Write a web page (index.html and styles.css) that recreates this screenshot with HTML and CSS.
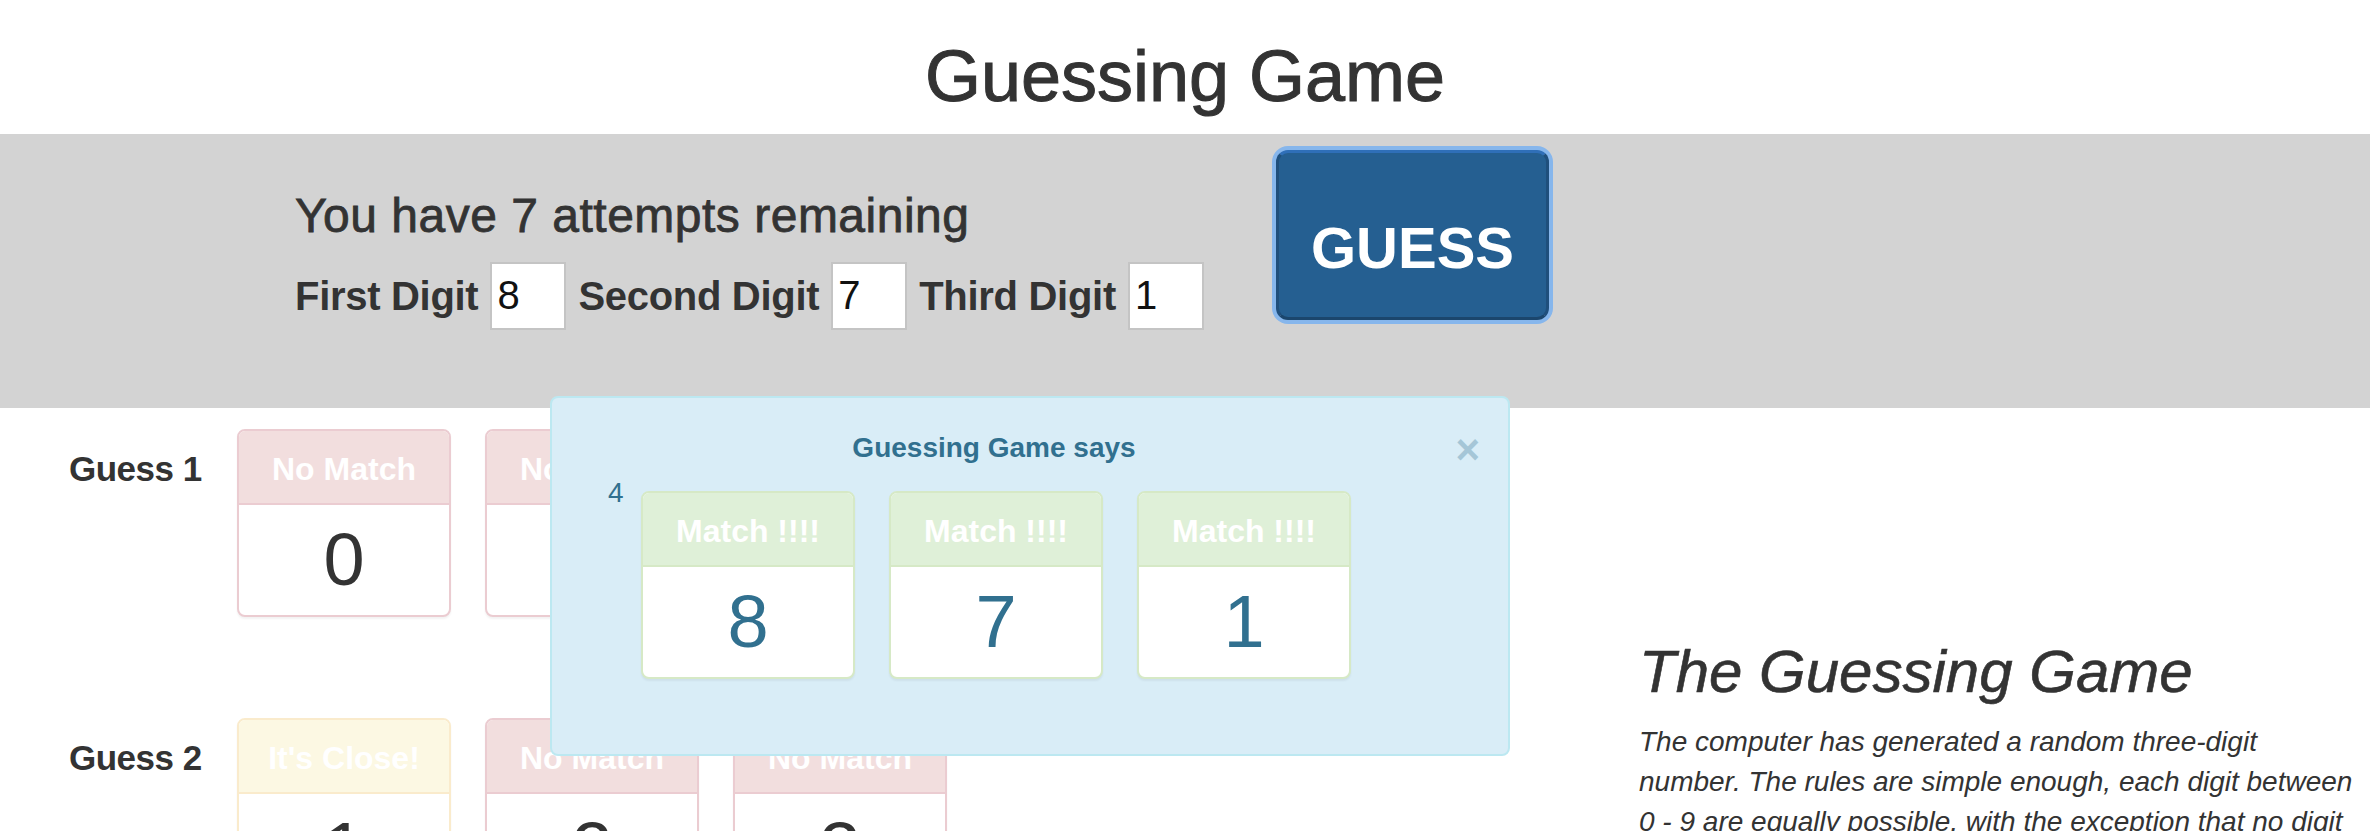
FILE: index.html
```html
<!DOCTYPE html>
<html lang="en">
<head>
<meta charset="utf-8">
<title>Guessing Game</title>
<link rel="stylesheet" href="styles.css">
</head>
<body>
<h1 class="page-title">Guessing Game</h1>

<section class="band">
  <div class="controls">
    <h3 class="attempts">You have 7 attempts remaining</h3>
    <div class="digits">
      <label class="digit-label" for="d1">First Digit</label>
      <input class="digit-input" id="d1" type="text" value="8">
      <label class="digit-label" for="d2">Second Digit</label>
      <input class="digit-input" id="d2" type="text" value="7">
      <label class="digit-label" for="d3">Third Digit</label>
      <input class="digit-input" id="d3" type="text" value="1">
    </div>
  </div>
  <button class="guess-btn" type="button">GUESS</button>
</section>

<main class="main">
  <div class="guesses">
    <div class="guess-row">
      <div class="guess-label">Guess 1</div>
      <div class="cards">
        <div class="card card-danger"><div class="card-head">No Match</div><div class="card-body">0</div></div>
        <div class="card card-danger"><div class="card-head">No Match</div><div class="card-body">5</div></div>
        <div class="card card-danger"><div class="card-head">No Match</div><div class="card-body">9</div></div>
      </div>
    </div>
    <div class="guess-row">
      <div class="guess-label">Guess 2</div>
      <div class="cards">
        <div class="card card-warning"><div class="card-head">It's Close!</div><div class="card-body">1</div></div>
        <div class="card card-danger"><div class="card-head">No Match</div><div class="card-body">2</div></div>
        <div class="card card-danger"><div class="card-head">No Match</div><div class="card-body">3</div></div>
      </div>
    </div>
  </div>

  <aside class="about">
    <h2 class="about-title">The Guessing Game</h2>
    <p class="about-text">The computer has generated a random three-digit number. The rules are simple enough, each digit between 0 - 9 are equally possible, with the exception that no digit is repeated. You have 10 attempts to find the number.</p>
  </aside>
</main>

<div class="alert" role="alert">
  <span class="alert-close">&times;</span>
  <div class="alert-title">Guessing Game says</div>
  <div class="alert-row">
    <span class="alert-count">4</span>
    <div class="cards">
      <div class="card card-success"><div class="card-head">Match !!!!</div><div class="card-body">8</div></div>
      <div class="card card-success"><div class="card-head">Match !!!!</div><div class="card-body">7</div></div>
      <div class="card card-success"><div class="card-head">Match !!!!</div><div class="card-body">1</div></div>
    </div>
  </div>
</div>
</body>
</html>
```

FILE: styles.css
```css
* { box-sizing: border-box; }

html { overflow: hidden; }

body {
  margin: 0;
  font-family: "Liberation Sans", Arial, sans-serif;
  color: #333;
  background: #fff;
}

.page-title {
  margin: 37px 0 18px;
  font-size: 72px;
  line-height: 1.1;
  font-weight: normal;
  text-align: center;
  -webkit-text-stroke: 1px #333;
}

/* ---------- control band ---------- */
.band {
  display: flex;
  align-items: flex-start;
  height: 274px;
  padding: 16px 0 0 295px;
  background: #d3d3d3;
}

.controls {
  width: 981px;
  margin-top: 40px;
}

.attempts {
  margin: 0 0 19px;
  font-size: 48px;
  line-height: 1.1;
  font-weight: normal;
  letter-spacing: 0.5px;
  -webkit-text-stroke: 0.8px #333;
}

.digits {
  display: flex;
  align-items: center;
  gap: 12px;
  height: 68px;
}

.digit-label {
  font-size: 40px;
  line-height: 46px;
  font-weight: bold;
  letter-spacing: -0.3px;
}

.digit-input {
  width: 76px;
  height: 68px;
  margin: 0;
  padding: 0 5px;
  border: 2px solid #c4c4c4;
  background: #fff;
  font-family: "Liberation Sans", Arial, sans-serif;
  font-size: 40px;
  color: #111;
  outline: none;
}

.guess-btn {
  display: flex;
  align-items: center;
  justify-content: center;
  width: 273px;
  height: 170px;
  margin: 0;
  padding: 24px 0 0;
  border: 3px solid;
  border-color: #2f6fb8 #1f4f7c #1b466d #1f4f7c;
  border-radius: 12px;
  background: #255f91;
  color: #fff;
  font-family: "Liberation Sans", Arial, sans-serif;
  font-size: 58px;
  font-weight: bold;
  box-shadow: 0 0 0 4px #86b6ec;
}

/* ---------- main area ---------- */
.main {
  display: flex;
  padding-top: 21px;
}

.guesses {
  width: 1639px;
  padding-left: 69px;
}

.guess-row {
  display: flex;
  align-items: flex-start;
  margin-bottom: 101px;
}

.guess-label {
  width: 168px;
  margin-top: 20px;
  font-size: 35px;
  line-height: 40px;
  font-weight: bold;
  letter-spacing: -0.5px;
}

.cards {
  display: flex;
  gap: 34px;
}

.card {
  width: 214px;
  border: 2px solid;
  border-radius: 8px;
  background: #fff;
  overflow: hidden;
  box-shadow: 0 2px 2px rgba(0, 0, 0, 0.05);
}

.card-head {
  padding: 21px 0 16px;
  border-bottom: 2px solid;
  font-size: 32px;
  line-height: 35px;
  font-weight: bold;
  color: #fff;
  text-align: center;
  white-space: nowrap;
}

.card-body {
  display: flex;
  align-items: center;
  justify-content: center;
  height: 110px;
  font-size: 74px;
  line-height: 1;
  color: #333;
}

.card-danger { border-color: #ebccd1; }
.card-danger .card-head { background: #f2dede; border-color: #ebccd1; }

.card-warning { border-color: #faebcc; }
.card-warning .card-head { background: #fcf8e3; border-color: #faebcc; }

.card-success { border-color: #d6e9c6; }
.card-success .card-head { background: #dff0d8; border-color: #d6e9c6; }
.card-success .card-body { color: #31708f; }

.about {
  width: 720px;
  padding-top: 210px;
}

.about-title {
  margin: 0 0 17px;
  font-size: 60px;
  line-height: 1.1;
  font-weight: normal;
  font-style: italic;
  -webkit-text-stroke: 0.6px #333;
}

.about-text {
  margin: 0;
  font-size: 28px;
  line-height: 40px;
  font-style: italic;
}

/* ---------- overlay alert ---------- */
.alert {
  position: absolute;
  left: 550px;
  top: 396px;
  width: 960px;
  height: 360px;
  padding: 30px;
  border: 2px solid #bce8f1;
  border-radius: 8px;
  background: #d9edf7;
  color: #31708f;
}

.alert-close {
  position: absolute;
  top: 31px;
  right: 28px;
  font-size: 42px;
  line-height: 1;
  font-weight: bold;
  color: #31708f;
  opacity: 0.3;
}

.alert-title {
  margin-right: 72px;
  font-size: 28px;
  line-height: 40px;
  font-weight: bold;
  text-align: center;
}

.alert-row {
  display: flex;
  align-items: flex-start;
  margin-top: 5px;
  padding-left: 26px;
}

.alert-count {
  width: 33px;
  font-size: 28px;
  line-height: 40px;
}

.alert-row .cards {
  margin-top: 18px;
}
```
